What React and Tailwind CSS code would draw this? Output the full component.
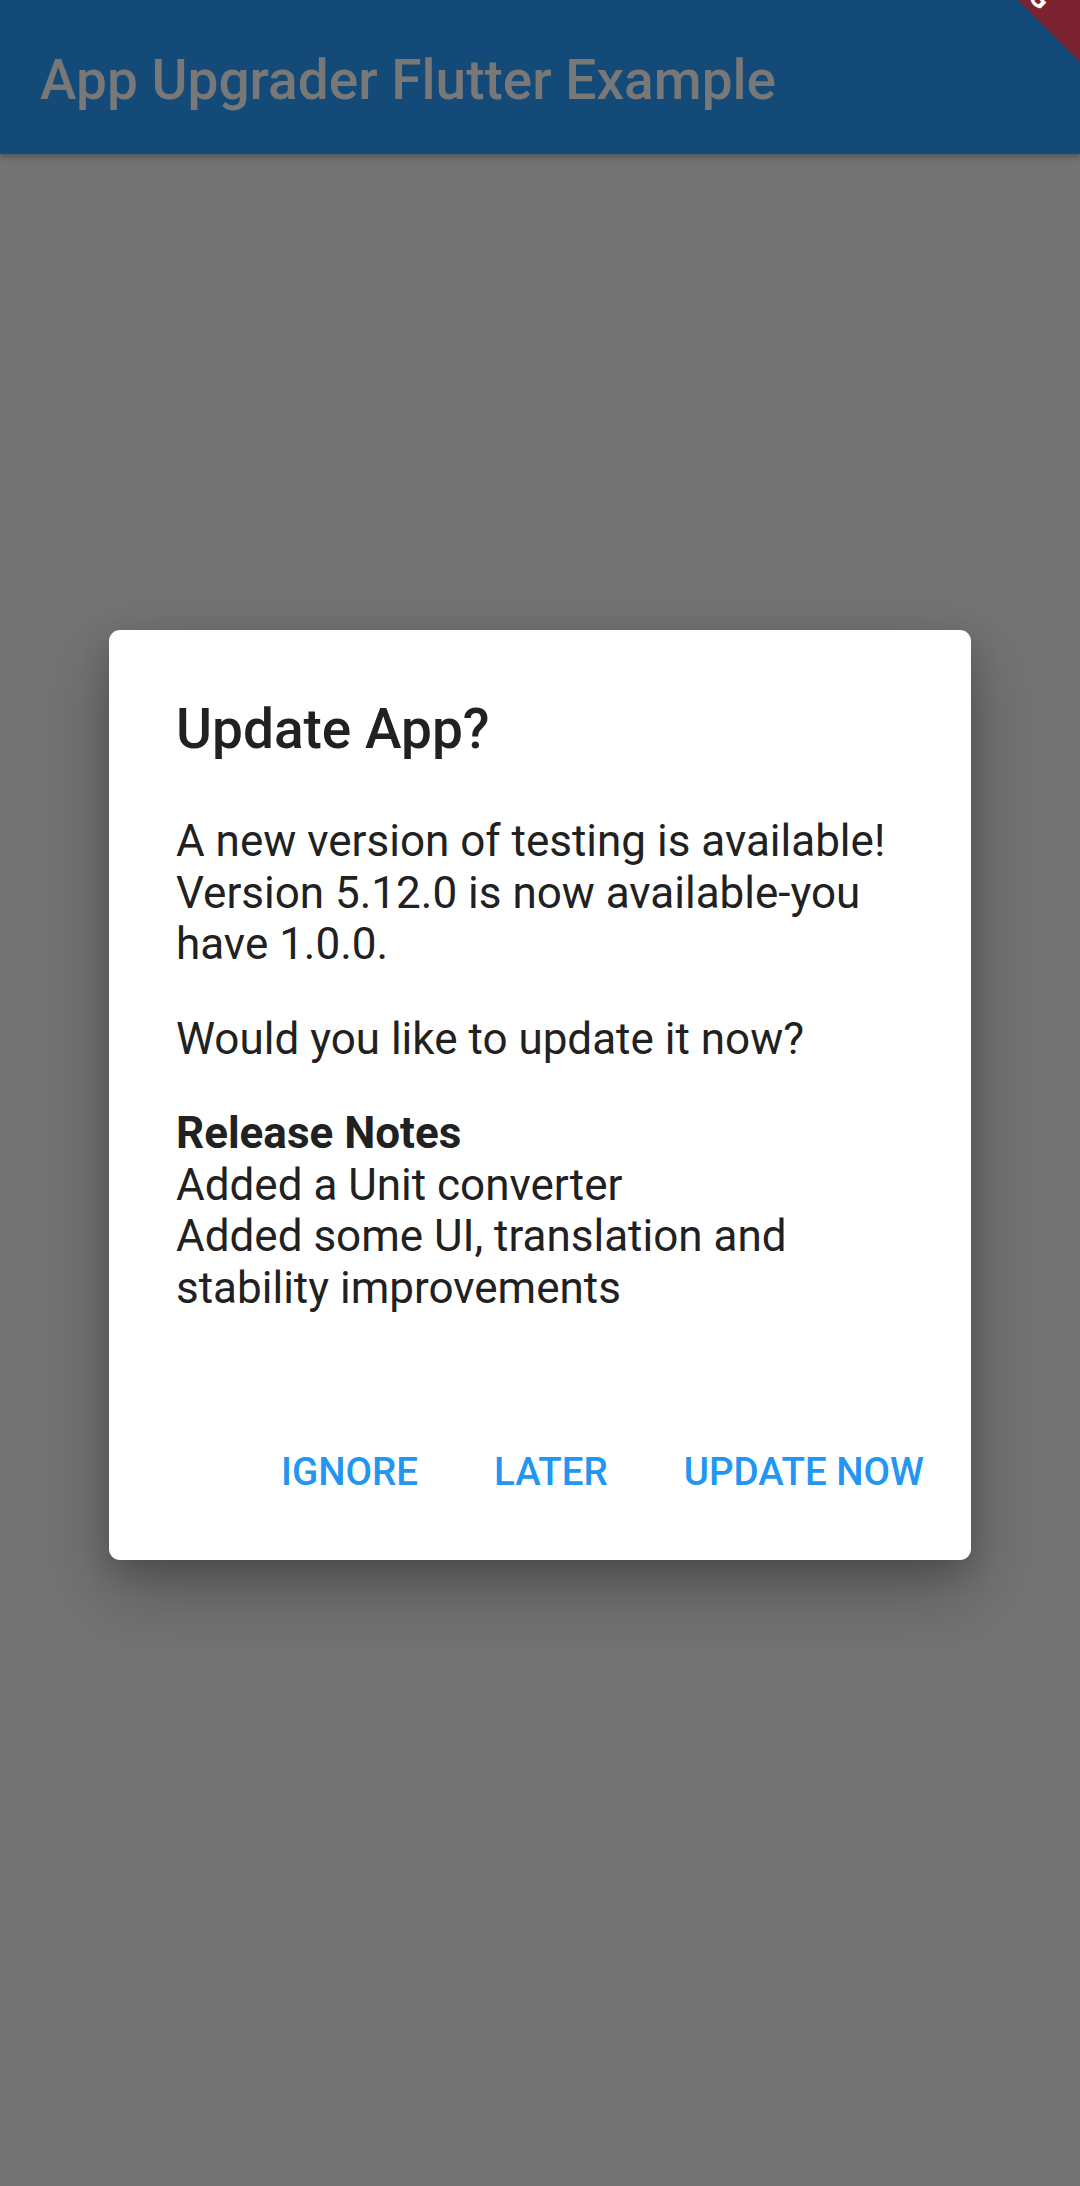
import React from 'react';

const DebugBanner = () => (
    <svg
        className="absolute right-0 top-0 z-20"
        width="80"
        height="80"
        viewBox="0 0 80 80"
    >
        <polygon points="18,0 80,0 80,62" fill="#7b2331" />
        <text
            x="0"
            y="0"
            transform="translate(40 11) rotate(45)"
            textAnchor="end"
            fontFamily="Roboto, sans-serif"
            fontWeight="700"
            fontSize="28"
            fill="#ffffff"
        >
            DEBUG
        </text>
    </svg>
);

const App = () => {
    return (
        <div className="relative h-[2186px] w-[1080px] overflow-hidden bg-[#737373] font-['Roboto',sans-serif]">
            {/* App bar */}
            <header className="relative z-10 flex h-[154px] items-center bg-[#134a78] pl-[40px] pt-[6px] shadow-[0_3px_6px_rgba(0,0,0,0.28)]">
                <h1 className="text-[55px] font-medium text-[#787878]">App Upgrader Flutter Example</h1>
            </header>

            {/* Dialog */}
            <div className="flex justify-center pt-[476px]">
                <div className="w-[862px] rounded-[11px] bg-white shadow-[0_30px_70px_rgba(0,0,0,0.26),0_12px_28px_rgba(0,0,0,0.16)]">
                    <div className="px-[67px] pt-[67px] text-[#212121]">
                        <h2 className="text-[55px] font-medium leading-[64px]">Update App?</h2>
                        <div className="mt-[55px] text-[44px] leading-[51.5px]">
                            <p>
                                A new version of testing is available!
                                <br />
                                Version 5.12.0 is now available-you
                                <br />
                                have 1.0.0.
                            </p>
                            <p className="mt-[43px]">Would you like to update it now?</p>
                            <p className="mt-[43px] font-bold">Release Notes</p>
                            <p>Added a Unit converter</p>
                            <p>
                                Added some UI, translation and
                                <br />
                                stability improvements
                            </p>
                        </div>
                    </div>

                    <div className="flex justify-end gap-[76px] pb-[66px] pr-[47px] pt-[135px] text-[38.5px] font-medium leading-[45px] text-[#2196f3]">
                        <span>IGNORE</span>
                        <span>LATER</span>
                        <span>UPDATE NOW</span>
                    </div>
                </div>
            </div>

            <DebugBanner />
        </div>
    );
};

export default App;
